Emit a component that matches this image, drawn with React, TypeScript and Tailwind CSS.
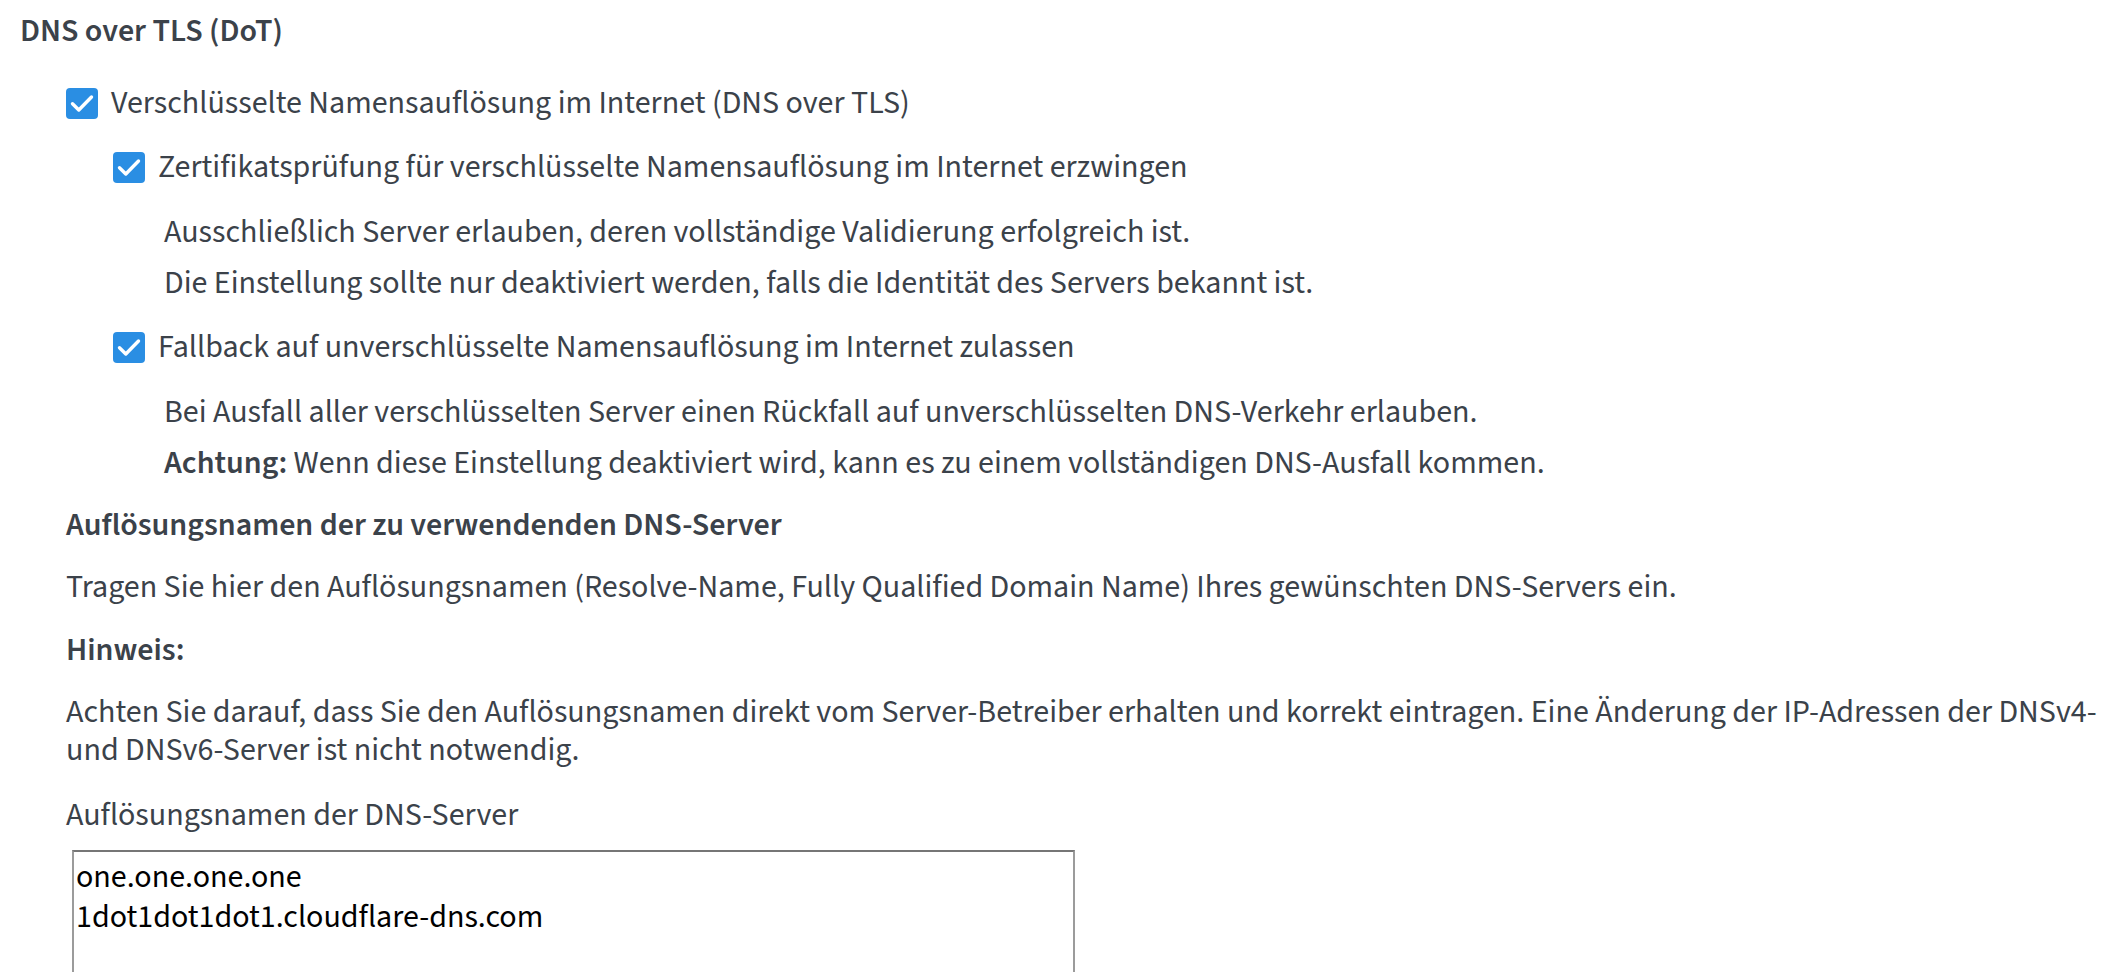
import React from "react";

const FONT = { fontFamily: '"Source Sans 3", "Source Sans Pro", Lato, sans-serif' };

function Check() {
  return (
    <span className="flex h-[31px] w-[32px] shrink-0 items-center justify-center rounded-[4px] bg-[#2a8ee3]">
      <svg width="32" height="31" viewBox="0 0 32 31" fill="none">
        <path
          d="M6.5 15.8 L12.8 22 L25.5 9"
          stroke="#ffffff"
          strokeWidth="3.4"
          strokeLinecap="round"
          strokeLinejoin="round"
        />
      </svg>
    </span>
  );
}

function CheckRow({ children, className = "" }: { children: React.ReactNode; className?: string }) {
  return (
    <label className={`flex items-center gap-[13px] leading-[38px] ${className}`}>
      <Check />
      <span>{children}</span>
    </label>
  );
}

export default function App() {
  return (
    <div
      className="h-[972px] overflow-hidden bg-white pl-[20px] pr-[6px] pt-[12px] text-[32px] leading-[38px] text-[#3b424a]"
      style={FONT}
    >
      <h2 className="font-semibold leading-[38px]">DNS over TLS (DoT)</h2>

      <div className="mt-[34px] pl-[46px]">
        <CheckRow>Verschlüsselte Namensauflösung im Internet (DNS over TLS)</CheckRow>

        <div className="pl-[47px]">
          <CheckRow className="mt-[26px]">
            Zertifikatsprüfung für verschlüsselte Namensauflösung im Internet erzwingen
          </CheckRow>
          <div className="pl-[51px]">
            <p className="mt-[27px]">
              Ausschließlich Server erlauben, deren vollständige Validierung erfolgreich ist.
            </p>
            <p className="mt-[13px]">
              Die Einstellung sollte nur deaktiviert werden, falls die Identität des Servers bekannt ist.
            </p>
          </div>

          <CheckRow className="mt-[26px]">
            Fallback auf unverschlüsselte Namensauflösung im Internet zulassen
          </CheckRow>
          <div className="pl-[51px]">
            <p className="mt-[27px]">
              Bei Ausfall aller verschlüsselten Server einen Rückfall auf unverschlüsselten DNS-Verkehr erlauben.
            </p>
            <p className="mt-[13px]">
              <span className="font-semibold">Achtung:</span> Wenn diese Einstellung deaktiviert wird, kann es
              zu einem vollständigen DNS-Ausfall kommen.
            </p>
          </div>
        </div>

        <h3 className="mt-[24px] font-semibold">Auflösungsnamen der zu verwendenden DNS-Server</h3>
        <p className="mt-[24px]">
          Tragen Sie hier den Auflösungsnamen (Resolve-Name, Fully Qualified Domain Name) Ihres gewünschten
          DNS-Servers ein.
        </p>
        <p className="mt-[25px] font-semibold">Hinweis:</p>
        <p className="mt-[24px]">
          Achten Sie darauf, dass Sie den Auflösungsnamen direkt vom Server-Betreiber erhalten und korrekt
          eintragen. Eine Änderung der IP-Adressen der DNSv4- und DNSv6-Server ist nicht notwendig.
        </p>

        <label className="mt-[27px] block">Auflösungsnamen der DNS-Server</label>
        <textarea
          readOnly
          className="ml-[6px] mt-[16px] block h-[220px] w-[1003px] resize-none border-2 border-[#9b9b9b] border-t-[#767676] bg-white px-[2px] pt-[5px] text-[32px] leading-[40px] text-black outline-none"
          style={FONT}
          defaultValue={"one.one.one.one\n1dot1dot1dot1.cloudflare-dns.com"}
        />
      </div>
    </div>
  );
}
